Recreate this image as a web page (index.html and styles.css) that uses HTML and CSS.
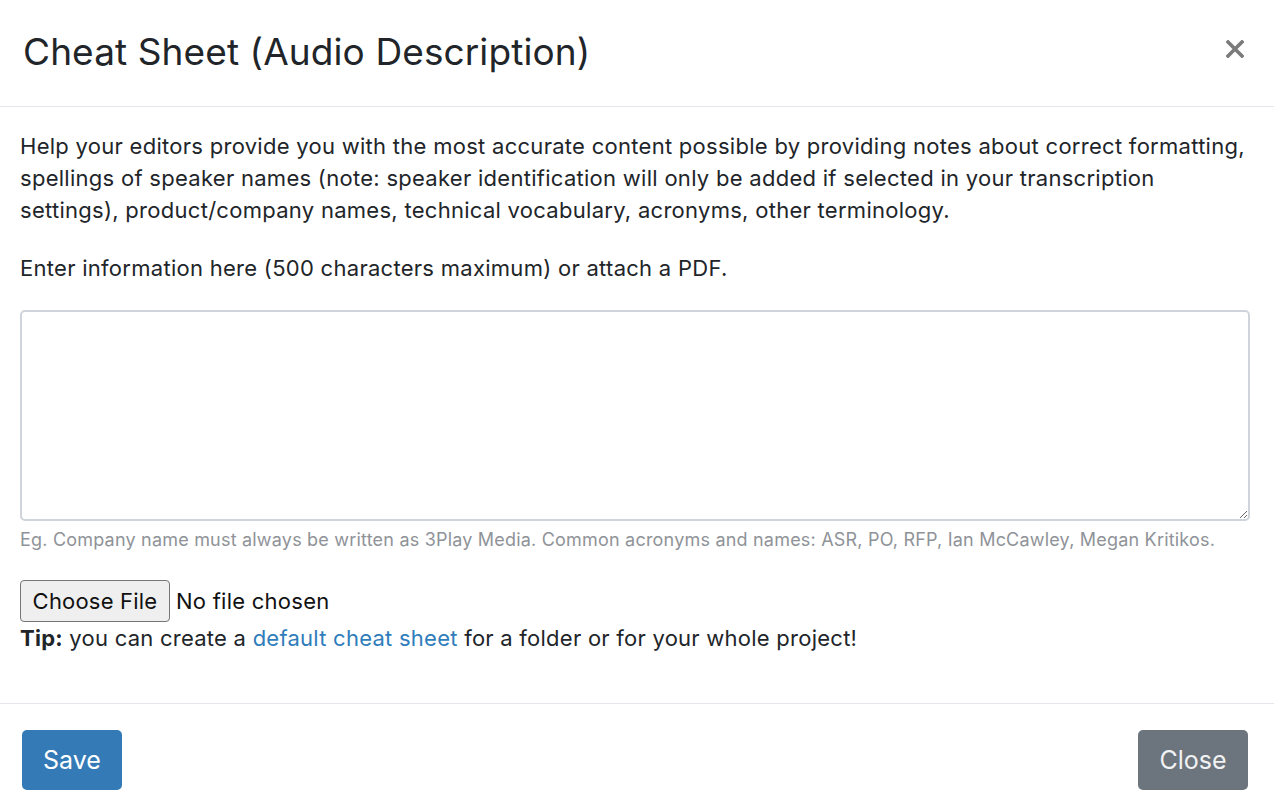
FILE: index.html
```html
<!DOCTYPE html>
<html lang="en">
<head>
<meta charset="utf-8">
<title>Cheat Sheet (Audio Description)</title>
<link rel="stylesheet" href="styles.css">
</head>
<body>
<div class="modal">
  <div class="modal-header">
    <h5 class="modal-title">Cheat Sheet (Audio Description)</h5>
    <button class="close" type="button" aria-label="Close">
      <svg width="18" height="18" viewBox="0 0 18 18"><path d="M2 2 L16 16 M16 2 L2 16" stroke="#7b7b7b" stroke-width="3.6" stroke-linecap="square"/></svg>
    </button>
  </div>
  <div class="modal-body">
    <p class="intro">Help your editors provide you with the most accurate content possible by providing notes about correct formatting, spellings of speaker names (note: speaker identification will only be added if selected in your transcription settings), product/company names, technical vocabulary, acronyms, other terminology.</p>
    <p class="intro enter">Enter information here (500 characters maximum) or attach a PDF.</p>
    <div class="field">
      <textarea class="textarea" aria-label="Cheat sheet"></textarea>
      <div class="help">Eg. Company name must always be written as 3Play Media. Common acronyms and names: ASR, PO, RFP, Ian McCawley, Megan Kritikos.</div>
    </div>
    <div class="file-row">
      <button class="file-btn" type="button">Choose File</button>
      <span class="file-name">No file chosen</span>
    </div>
    <div class="tip"><strong>Tip:</strong> you can create a <a href="#" class="link">default cheat sheet</a> for a folder or for your whole project!</div>
  </div>
  <div class="modal-footer">
    <button class="btn btn-primary" type="button">Save</button>
    <button class="btn btn-secondary" type="button">Close</button>
  </div>
</div>
</body>
</html>
```

FILE: styles.css
```css
* { box-sizing: border-box; }
html, body { margin: 0; padding: 0; background: #fff; }
body {
  font-family: Inter, "Noto Sans", "Liberation Sans", sans-serif;
  color: #212529;
}
.modal {
  width: 1274px;
  height: 812px;
  display: flex;
  flex-direction: column;
}
.modal-header {
  height: 107px;
  display: flex;
  align-items: center;
  justify-content: space-between;
  padding: 0 30px 0 23px;
  border-bottom: 1px solid #e3e6ea;
}
.modal-title {
  margin: 0;
  font-size: 37px;
  font-weight: 400;
  line-height: 1.2;
  letter-spacing: 0.1px;
  color: #212529;
  padding-bottom: 2px;
}
.close {
  border: 0;
  background: transparent;
  padding: 0;
  width: 18px;
  height: 18px;
  display: flex;
  margin-bottom: 8px;
}
.modal-body {
  padding: 23px 24px 0 20px;
  height: 597px;
  border-bottom: 1px solid #e3e6ea;
}
.intro {
  margin: 0 0 26px;
  font-size: 22px;
  line-height: 32px;
  letter-spacing: 0.28px;
  color: #212529;
}
.enter { margin-bottom: 26px; }
.field { display: flex; flex-direction: column; }
.textarea {
  display: block;
  width: 1230px;
  height: 211px;
  border: 2px solid #ced4da;
  border-radius: 5px;
  resize: vertical;
  font-family: inherit;
  font-size: 20px;
}
.help {
  margin-top: 7px;
  font-size: 18px;
  line-height: 24px;
  color: #8f9398;
  letter-spacing: 0.2px;
}
.file-row {
  margin-top: 28px;
  display: flex;
  align-items: center;
  gap: 6px;
}
.file-btn {
  height: 42px;
  width: 150px;
  padding: 0;
  font-family: inherit;
  font-size: 22px;
  letter-spacing: 0.2px;
  color: #111;
  background: #efefef;
  border: 1px solid #767676;
  border-radius: 4px;
}
.file-name { font-size: 22px; letter-spacing: 0.25px; color: #111; }
.tip {
  margin-top: 0;
  font-size: 22px;
  line-height: 32px;
  letter-spacing: 0.25px;
  color: #212529;
}
.tip strong { font-weight: 700; }
.link { color: #2f7dba; text-decoration: none; }
.modal-footer {
  flex: 1;
  display: flex;
  justify-content: space-between;
  align-items: flex-start;
  padding: 26px 26px 0 22px;
}
.btn {
  height: 60px;
  border: 0;
  border-radius: 5px;
  font-family: inherit;
  font-size: 25px;
  color: #fff;
  padding: 0;
}
.btn-primary { background: #337ab7; width: 100px; }
.btn-secondary { background: #6c757d; width: 110px; color: #f1f2f3; }
```
